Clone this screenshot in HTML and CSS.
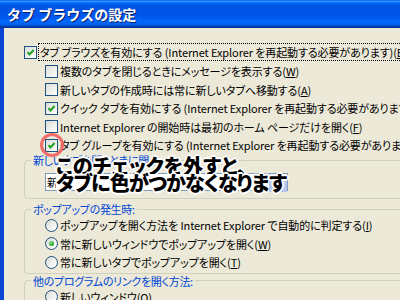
FILE: index.html
```html
<!DOCTYPE html>
<html lang="ja">
<head>
<meta charset="utf-8">
<title>タブ ブラウズの設定</title>
<link rel="stylesheet" href="styles.css">
</head>
<body>
<div class="window">
  <div class="titlebar"><span class="title">タブ ブラウズの設定</span></div>
  <div class="frame">
    <div class="content">
      <div class="row first">
        <span class="cb"><svg viewBox="0 0 11 11" width="11" height="11"><path d="M2.5 5.2 L4.5 7.4 L8.6 3" fill="none" stroke="#21A121" stroke-width="2"/></svg></span>
        <span class="label focus">タブ ブラウズを有効にする (Internet Explorer を再起動する必要があります)(<u>B</u>)</span>
      </div>
      <div class="row sub">
        <span class="cb"></span>
        <span class="label">複数のタブを閉じるときにメッセージを表示する(<u>W</u>)</span>
      </div>
      <div class="row sub">
        <span class="cb"></span>
        <span class="label">新しいタブの作成時には常に新しいタブへ移動する(<u>A</u>)</span>
      </div>
      <div class="row sub">
        <span class="cb"><svg viewBox="0 0 11 11" width="11" height="11"><path d="M2.5 5.2 L4.5 7.4 L8.6 3" fill="none" stroke="#21A121" stroke-width="2"/></svg></span>
        <span class="label">クイック タブを有効にする (Internet Explorer を再起動する必要があります)(<u>Q</u>)</span>
      </div>
      <div class="row sub">
        <span class="cb"></span>
        <span class="label">Internet Explorer の開始時は最初のホーム ページだけを開く(<u>F</u>)</span>
      </div>
      <div class="row sub">
        <span class="cb"><svg viewBox="0 0 11 11" width="11" height="11"><path d="M2.5 5.2 L4.5 7.4 L8.6 3" fill="none" stroke="#21A121" stroke-width="2"/></svg></span>
        <span class="label">タブ グループを有効にする (Internet Explorer を再起動する必要があります)(<u>G</u>)</span>
      </div>

      <fieldset class="group g1">
        <legend>新しいタブを開くときに開く</legend>
        <div class="combo">新しいタブ ページ</div>
      </fieldset>

      <fieldset class="group g2">
        <legend>ポップアップの発生時:</legend>
        <div class="row radio-row"><span class="rb"></span><span class="label">ポップアップを開く方法を Internet Explorer で自動的に判定する(<u>I</u>)</span></div>
        <div class="row radio-row"><span class="rb on"><span class="dot"></span></span><span class="label">常に新しいウィンドウでポップアップを開く(<u>W</u>)</span></div>
        <div class="row radio-row"><span class="rb"></span><span class="label">常に新しいタブでポップアップを開く(<u>T</u>)</span></div>
      </fieldset>

      <fieldset class="group g3">
        <legend>他のプログラムのリンクを開く方法:</legend>
        <div class="row radio-row"><span class="rb"></span><span class="label">新しいウィンドウ(<u>O</u>)</span></div>
      </fieldset>
    </div>
  </div>

  <span class="ring"></span>
  <div class="note">
    <div class="line1">このチェックを外すと、</div>
    <div class="line2">タブに色がつかなくなりま<span class="sel">す</span></div>
  </div>
</div>
</body>
</html>
```

FILE: styles.css
```css
* { box-sizing: border-box; }

body {
  margin: 0;
  background: #ECE9D8;
  font-family: "Noto Sans CJK JP", "Noto Sans", sans-serif;
}

.window {
  position: relative;
  width: 400px;
  height: 300px;
  overflow: hidden;
}

.titlebar {
  height: 28px;
  display: flex;
  align-items: center;
  padding-left: 7px;
  background: linear-gradient(to bottom,
    #0058EE 0%, #3593FF 4%, #288EFF 6%, #127DFF 8%, #036FFC 10%,
    #0262EE 14%, #0057E5 20%, #0054E3 24%, #0055EB 56%, #005BF5 66%,
    #026AFE 76%, #0062EF 86%, #0052D6 92%, #0040AB 94%, #003092 100%);
}

.title {
  color: #fff;
  font-weight: 700;
  font-size: 14px;
  line-height: 1;
  text-shadow: 1px 1px 0 #0A1E6A;
}

.frame {
  height: 272px;
  border-left: 4px solid #0A45D6;
  background: #ECE9D8;
}

.content {
  padding: 14px 0 0 20px;
  font-size: 11px;
  color: #000;
}

.row {
  display: flex;
  align-items: center;
  height: 18.5px;
  white-space: nowrap;
}

.row.first { height: 20px; }
.row.sub { margin-left: 21px; }

.label {
  font-size: 11px;
  line-height: 14px;
  letter-spacing: -0.1px;
  font-feature-settings: "palt";
  margin-left: 2px;
}

.label u { text-underline-offset: 1px; }

.focus {
  margin-left: 1px;
  padding: 1px;
  border: 1px dotted #000;
}

.cb {
  flex: none;
  width: 13px;
  height: 13px;
  border: 1px solid #1C5180;
  background: linear-gradient(135deg, #DCDCD7 0%, #F1F1EE 60%, #FFFFFF 100%);
  display: flex;
  align-items: center;
  justify-content: center;
}

.cb svg { display: block; }

.group {
  margin: 0;
  padding: 0 0 0 6px;
  width: 430px;
  min-width: 0;
  border: 1px solid #D0D0BF;
  border-radius: 4px;
}

.group legend {
  padding: 0 2px;
  color: #0046D5;
  font-size: 11px;
  line-height: 14px;
  letter-spacing: -0.3px;
  font-feature-settings: "palt";
}

.g1 {
  margin-top: -1.5px;
  padding-top: 6px;
  padding-bottom: 7px;
}

.g2 {
  margin-top: 3px;
  padding-bottom: 1px;
}

.g3 { margin-top: 0; }

.radio-row { margin-left: 14px; }

.combo {
  margin-left: 14px;
  width: 243px;
  height: 18px;
  border: 1px solid #7F9DB9;
  background: #fff;
  padding-left: 1px;
  font-size: 11px;
  line-height: 16px;
  white-space: nowrap;
  overflow: hidden;
}

.rb {
  flex: none;
  width: 13px;
  height: 13px;
  border: 1px solid #1C5180;
  border-radius: 50%;
  background: linear-gradient(135deg, #D8D8D2 0%, #F3F3F0 60%, #FFFFFF 100%);
  display: flex;
  align-items: center;
  justify-content: center;
}

.rb .dot {
  width: 5px;
  height: 5px;
  border-radius: 50%;
  background: radial-gradient(circle at 35% 35%, #7BE07B 0%, #2EAB2E 60%, #1E8E1E 100%);
}

.ring {
  position: absolute;
  left: 40px;
  top: 133px;
  width: 24px;
  height: 24px;
  border: 3.5px solid rgba(240, 95, 95, 0.9);
  border-radius: 50%;
}

.note {
  position: absolute;
  left: 56px;
  top: 157px;
  font-size: 20px;
  line-height: 17px;
  font-weight: 900;
  color: #000;
  white-space: nowrap;
  font-feature-settings: "palt";
  text-shadow:
    -1px -1px 0 #fff, 1px -1px 0 #fff, -1px 1px 0 #fff, 1px 1px 0 #fff,
    0 -2px 0 #fff, 0 2px 0 #fff, -2px 0 0 #fff, 2px 0 0 #fff;
}

.line2 {
  display: inline-block;
  height: 16px;
  background: #fff;
  letter-spacing: -0.8px;
}

.sel {
  display: inline-block;
  height: 18px;
  margin-top: -1px;
  letter-spacing: 0;
  background: #B6C6EC;
}
```
